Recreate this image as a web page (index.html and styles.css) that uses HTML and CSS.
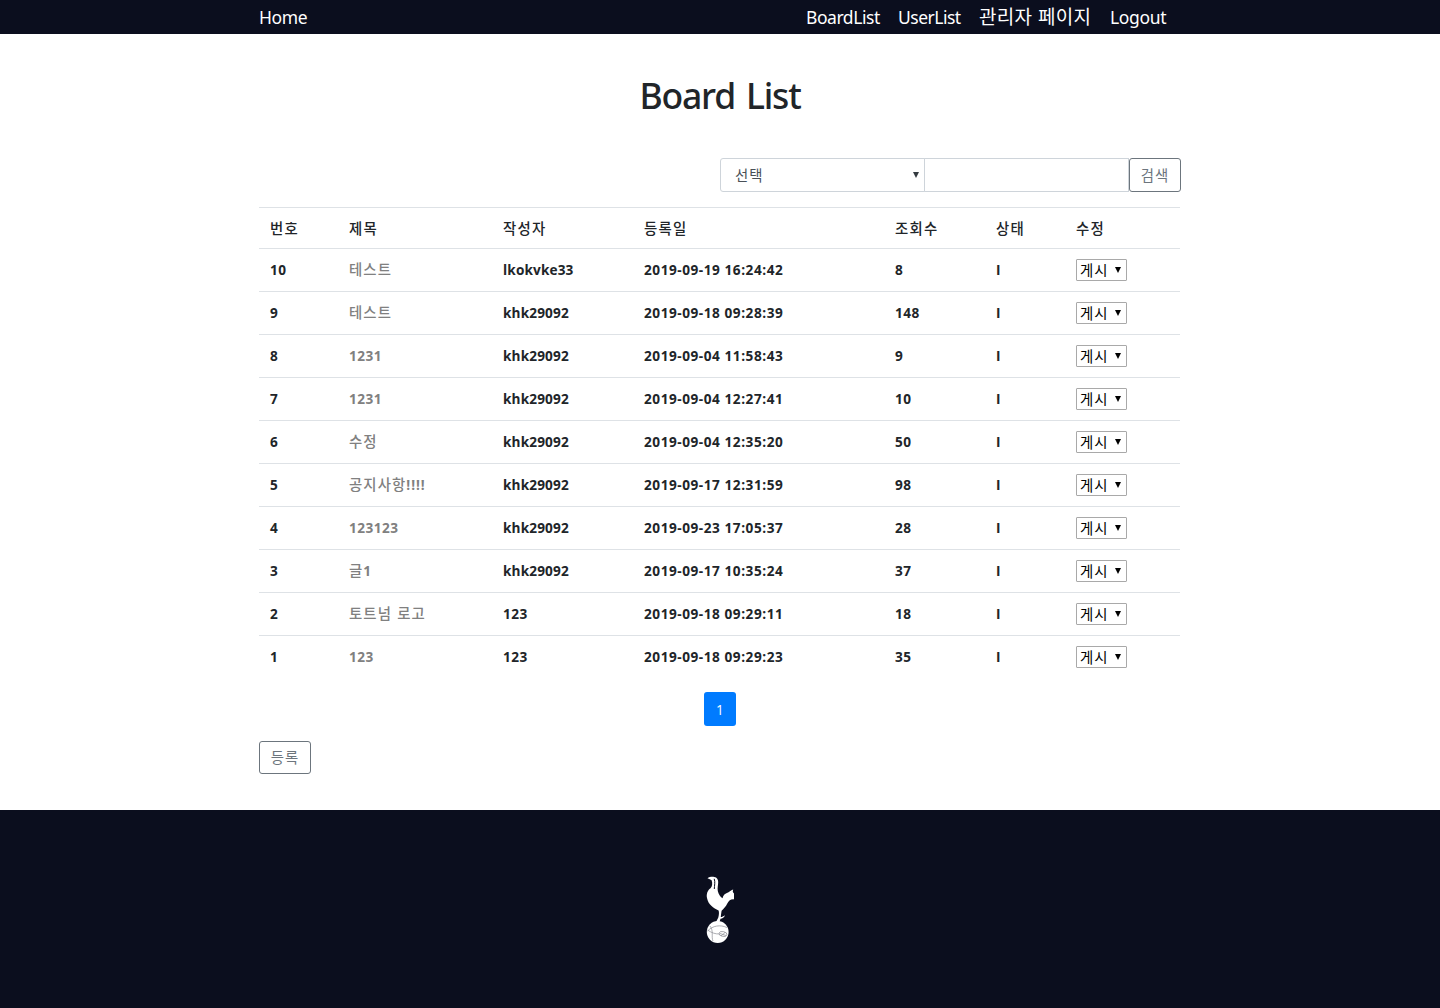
FILE: index.html
```html
<!DOCTYPE html>
<html lang="ko">
<head>
<meta charset="utf-8">
<title>Board List</title>
<link rel="stylesheet" href="styles.css">
</head>
<body>
<nav class="topbar">
  <div class="container topbar-inner">
    <a class="nav-home">Home</a>
    <div class="nav-links"><a class="nav-board">BoardList</a><a class="nav-user">UserList</a><a class="nav-admin">관리자 페이지</a><a class="nav-logout">Logout</a></div>
  </div>
</nav>
<main class="container">
  <h1 class="title"><span>Board List</span></h1>
  <form class="search">
    <div class="search-type"><select><option>선택</option></select></div>
    <input class="search-text" type="text">
    <button class="btn btn-search" type="button">검색</button>
  </form>
  <table class="board">
    <colgroup><col class="c-no"><col class="c-title"><col class="c-writer"><col class="c-date"><col class="c-hits"><col class="c-state"><col class="c-edit"></colgroup>
    <thead><tr><th>번호</th><th>제목</th><th>작성자</th><th>등록일</th><th>조회수</th><th>상태</th><th>수정</th></tr></thead>
    <tbody>
    <tr><td>10</td><td><a class="ko">테스트</a></td><td>lkokvke33</td><td>2019-09-19 16:24:42</td><td>8</td><td>I</td><td><div class="state"><select><option>게시</option></select></div></td></tr>
    <tr><td>9</td><td><a class="ko">테스트</a></td><td>khk29092</td><td>2019-09-18 09:28:39</td><td>148</td><td>I</td><td><div class="state"><select><option>게시</option></select></div></td></tr>
    <tr><td>8</td><td><a>1231</a></td><td>khk29092</td><td>2019-09-04 11:58:43</td><td>9</td><td>I</td><td><div class="state"><select><option>게시</option></select></div></td></tr>
    <tr><td>7</td><td><a>1231</a></td><td>khk29092</td><td>2019-09-04 12:27:41</td><td>10</td><td>I</td><td><div class="state"><select><option>게시</option></select></div></td></tr>
    <tr><td>6</td><td><a class="ko">수정</a></td><td>khk29092</td><td>2019-09-04 12:35:20</td><td>50</td><td>I</td><td><div class="state"><select><option>게시</option></select></div></td></tr>
    <tr><td>5</td><td><a><span class="ko">공지사항</span><span class="marks">!!!!</span></a></td><td>khk29092</td><td>2019-09-17 12:31:59</td><td>98</td><td>I</td><td><div class="state"><select><option>게시</option></select></div></td></tr>
    <tr><td>4</td><td><a>123123</a></td><td>khk29092</td><td>2019-09-23 17:05:37</td><td>28</td><td>I</td><td><div class="state"><select><option>게시</option></select></div></td></tr>
    <tr><td>3</td><td><a><span class="ko">글</span><span class="marks">1</span></a></td><td>khk29092</td><td>2019-09-17 10:35:24</td><td>37</td><td>I</td><td><div class="state"><select><option>게시</option></select></div></td></tr>
    <tr><td>2</td><td><a class="ko">토트넘 로고</a></td><td>123</td><td>2019-09-18 09:29:11</td><td>18</td><td>I</td><td><div class="state"><select><option>게시</option></select></div></td></tr>
    <tr><td>1</td><td><a>123</a></td><td>123</td><td>2019-09-18 09:29:23</td><td>35</td><td>I</td><td><div class="state"><select><option>게시</option></select></div></td></tr>
    </tbody>
  </table>
  <div class="pagination"><a class="page">1</a></div>
  <button class="btn btn-write" type="button">등록</button>
</main>
<footer class="footer">
  <svg class="logo" width="28" height="68" viewBox="0 0 28 68">
    <path fill="#fff" d="M1.500 2.200C3.500 .8 6 .7 8.300 1C11 1.400 12.200 3.500 12.200 6C12.200 9 11.200 12 11.800 15C12.500 18.500 14.200 20.500 16.500 22.300C17.200 18.800 19.500 17.200 22.500 16.200C24 15.500 25.300 14.300 27.200 13.600C26.600 15.300 26.500 16.500 28 17.500V23.400C25 23 22.800 24.600 21.300 27.500C19.800 30.500 17.600 33 15.600 34.800C15.200 37 15 39.400 14.800 41C16 41 17.300 40.300 19 39.200C18.200 41.600 16.500 42.600 14.500 42.800L13.500 46H10L12.300 41.500C13 38.700 13.200 36.500 12.600 34.500C7.500 32.300 2.200 28.500 1 22C.2 18 1.600 14.300 4.500 12.300C6.300 10.500 6.700 7.200 5.600 4.300C4.600 3.400 3 3 1.500 2.200Z"/>
    <path fill="none" stroke="#0b0e1e" stroke-width="1" d="M8.200 2.800C9.400 6 8.400 9.500 8.300 13"/>
    <circle cx="11.700" cy="56" r="10.900" fill="#fff"/>
    <g fill="none" stroke="#8b8c94" stroke-width=".7"><path d="M1.500 55C7 49.500 14 48.500 21 51.500M1.500 54C6 57 9 58 13.500 58M4 50C8 55 5 61 7 65"/><ellipse cx="17" cy="58" rx="4" ry="2.400" transform="rotate(12 17 58)"/><path d="M14 57.500L20 59.500M15 60L19 56.500"/></g>
  </svg>
</footer>
</body>
</html>
```
FILE: styles.css
```css
* { box-sizing: border-box; }
body { margin: 0; background: #fff; color: #212529; font-family: "Open Sans", "Noto Sans CJK KR", sans-serif; font-size: 13.6px; }
.container { width: 922px; margin: 0 auto; }
.topbar { height: 34px; background: #0b0e1e; color: #fff; }
.topbar-inner { display: flex; justify-content: space-between; align-items: center; height: 34px; padding-right: 14px; font: 17.5px/34px "Noto Sans", "Noto Sans CJK KR", sans-serif; white-space: nowrap; }
.nav-home { letter-spacing: -.4px; }
.nav-links { display: flex; }
.nav-links a { margin-left: 18px; letter-spacing: -.35px; }
.nav-links .nav-board { width: 74px; letter-spacing: -.45px; }
.nav-links .nav-user { width: 63px; letter-spacing: -.5px; }
.nav-links .nav-admin { width: 113px; font: 19px/31px "Noto Sans CJK KR", sans-serif; letter-spacing: .3px; }
.nav-links .nav-logout { width: 57px; }
.title { height: 124px; margin: 0; padding-top: 34px; text-align: center; font: 500 35.5px/54px "Noto Sans", sans-serif; letter-spacing: -1.2px; word-spacing: 3px; }
.search { display: flex; height: 34px; margin-left: 461px; }
.search-type, .search-text { width: 205px; height: 34px; border: 1px solid #ced4da; background: #fff; }
.search-type { position: relative; border-radius: 3px 0 0 3px; }
.search-text { margin-left: -1px; padding: 0 10px; flex: 1; min-width: 0; }
select { appearance: none; border: 0; background: transparent; margin: 0; outline: 0; font-family: "Noto Sans CJK KR", sans-serif; font-weight: 400; }
.search-type select { width: 100%; height: 32px; padding: 0 14px 2px; color: #495057; font-size: 14.4px; letter-spacing: 1.1px; }
.search-type::after, .state::after { content: ""; position: absolute; border: 3px solid transparent; border-top: 6px solid currentColor; border-bottom: 0; }
.search-type::after { right: 5px; top: 13px; color: #343a40; }
.btn { width: 52px; height: 34px; padding: 0 0 2px; border: 1px solid #6c757d; border-radius: 3px; background: #fff; color: #6c757d; font: 14.4px/30px "Noto Sans CJK KR", sans-serif; letter-spacing: 1px; }
.btn-search { padding-bottom: 0; }
.board { width: 921px; margin-top: 15px; table-layout: fixed; border-collapse: separate; border-spacing: 0; font-weight: 700; }
.c-no { width: 79px; } .c-title { width: 154px; } .c-writer { width: 141px; } .c-date { width: 251px; } .c-hits { width: 101px; } .c-state { width: 80px; } .c-edit { width: 115px; }
.board th, .board td { padding: 0 11px; border-top: 1px solid #dee2e6; text-align: left; white-space: nowrap; line-height: 20px; }
.board th { height: 41px; padding-bottom: 1px; font: 500 14.4px/20px "Noto Sans CJK KR", sans-serif; letter-spacing: 1.2px; }
.board td { height: 43px; letter-spacing: .5px; }
.board td:nth-child(3) { letter-spacing: .15px; }
.board tr:nth-child(n+9) td:nth-child(3) { letter-spacing: .5px; }
.board td:nth-child(4) { letter-spacing: .55px; }
.board a { color: #808080; }
.board .ko { position: relative; top: -1px; font: 500 14.4px/20px "Noto Sans CJK KR", sans-serif; letter-spacing: 1.1px; }
.marks { position: relative; top: -1px; letter-spacing: .9px; }
.state { position: relative; width: 51px; height: 22px; border: 1px solid #a9a9a9; border-radius: 1px; }
.state select { display: block; width: 49px; height: 20px; padding: 0 0 0 3px; color: #000; font-size: 14.4px; line-height: 20px; letter-spacing: .9px; }
.state::after { right: 5px; top: 7px; color: #000; }
.pagination { display: flex; justify-content: center; margin: 14px 0 15px; }
.page { width: 32px; height: 34px; border-radius: 3px; background: #007bff; color: #fff; text-align: center; line-height: 36px; }
.btn-write { display: block; height: 33px; }
.footer { display: flex; justify-content: center; height: 198px; margin-top: 36px; padding-top: 66px; background: #0b0e1e; }
```
